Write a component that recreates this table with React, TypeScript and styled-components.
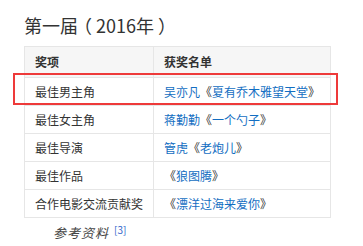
import React from 'react';
import styled, { createGlobalStyle } from 'styled-components';

const GlobalStyle = createGlobalStyle`
    html, body {
        margin: 0;
        padding: 0;
        background: #fff;
    }
    body {
        font-family: "Noto Sans CJK SC", "Noto Sans", sans-serif;
        color: #333;
    }
`;

const Section = styled.div`
    padding: 13px 0 0 24px;
`;

const Title = styled.h3`
    margin: 0 0 9px;
    font-size: 18px;
    line-height: 24px;
    font-weight: normal;
    color: #333;
`;

// half-width brackets padded back out to a full cell, so the glyph sits centred
const Paren = styled.span<{ $side: 'open' | 'close' }>`
    font-feature-settings: "halt";
    padding: ${(p) => (p.$side === 'open' ? '0 4px 0 5px' : '0 5px 0 4px')};
`;

const TableWrap = styled.div`
    position: relative;
    width: 307px;
`;

const Table = styled.table`
    width: 307px;
    border-collapse: collapse;
    table-layout: fixed;
    font-size: 12px;
`;

const Th = styled.th<{ $w?: number }>`
    width: ${(p) => (p.$w ? `${p.$w}px` : 'auto')};
    height: 30px;
    padding: 0 0 0 10px;
    text-align: left;
    font-weight: bold;
    line-height: 30px;
    background: #f6f6f6;
    border: 1px solid #e6e6e6;
    color: #333;
`;

const Td = styled.td`
    height: 27px;
    padding: 0 0 0 10px;
    line-height: 27px;
    border: 1px solid #e6e6e6;
    color: #333;
    white-space: nowrap;
`;

const Link = styled.a`
    color: #136ec2;
    text-decoration: none;
`;

// red frame drawn over the highlighted row
const Highlight = styled.div`
    position: absolute;
    left: -11px;
    top: 27px;
    width: 325px;
    height: 32px;
    box-sizing: border-box;
    border: 2px solid #ee3a3a;
    pointer-events: none;
`;

const Ref = styled.div`
    padding-left: 29px;
    margin-top: 3px;
    font-size: 13px;
    line-height: 18px;
    color: #444;
`;

const RefLabel = styled.i`
    font-style: italic;
    letter-spacing: 1px;
`;

const RefSup = styled.sup`
    margin-left: 5px;
    font-size: 10px;
    color: #3366cc;
    vertical-align: 4px;
    font-style: normal;
`;

type Award = {
    name: string;
    person?: string;
    work: string;
};

const awards: Award[] = [
    { name: '最佳男主角', person: '吴亦凡', work: '夏有乔木雅望天堂' },
    { name: '最佳女主角', person: '蒋勤勤', work: '一个勺子' },
    { name: '最佳导演', person: '管虎', work: '老炮儿' },
    { name: '最佳作品', work: '狼图腾' },
    { name: '合作电影交流贡献奖', work: '漂洋过海来爱你' },
];

export default function App() {
    return (
        <>
            <GlobalStyle />
            <Section>
                <Title>
                    第一届<Paren $side="open">（</Paren>2016年
                    <Paren $side="close">）</Paren>
                </Title>
                <TableWrap>
                    <Table>
                        <thead>
                            <tr>
                                <Th $w={118}>奖项</Th>
                                <Th>获奖名单</Th>
                            </tr>
                        </thead>
                        <tbody>
                            {awards.map((a) => (
                                <tr key={a.name}>
                                    <Td>{a.name}</Td>
                                    <Td>
                                        {a.person && <Link>{a.person}</Link>}
                                        《<Link>{a.work}</Link>》
                                    </Td>
                                </tr>
                            ))}
                        </tbody>
                    </Table>
                    <Highlight />
                </TableWrap>
                <Ref>
                    <RefLabel>参考资料</RefLabel>
                    <RefSup>[3]</RefSup>
                </Ref>
            </Section>
        </>
    );
}
